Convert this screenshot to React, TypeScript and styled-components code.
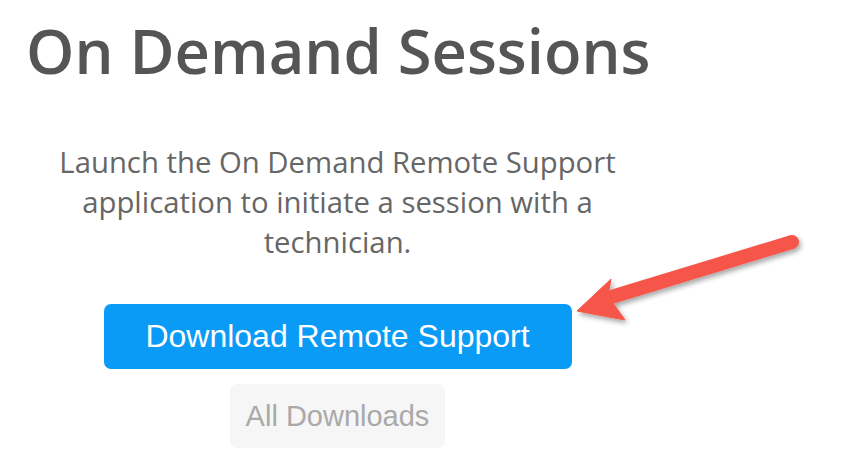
import React from "react";
import styled, { createGlobalStyle } from "styled-components";

const Global = createGlobalStyle`
  html, body { margin: 0; padding: 0; background: #ffffff; }
  body { width: 867px; height: 461px; overflow: hidden; }
`;

const Page = styled.div`
  position: relative;
  width: 867px;
  height: 461px;
  background: #fff;
`;

const Column = styled.main`
  width: 675px;
  display: flex;
  flex-direction: column;
  align-items: center;
  padding-top: 14px;
`;

const Title = styled.h1`
  align-self: stretch;
  margin: 0;
  padding-left: 26px;
  font-family: "Open Sans", sans-serif;
  font-weight: 600;
  font-size: 61.5px;
  line-height: 72px;
  color: #555555;
  letter-spacing: 0;
`;

const Lead = styled.p`
  margin: 56px 0 0;
  max-width: 600px;
  text-align: center;
  font-family: "Open Sans", sans-serif;
  font-weight: 400;
  font-size: 29.3px;
  line-height: 40px;
  color: #666666;
`;

const Button = styled.a<{ $variant: "primary" | "muted" }>`
  display: flex;
  align-items: center;
  justify-content: center;
  box-sizing: border-box;
  font-family: "Liberation Sans", Arial, sans-serif;
  text-decoration: none;
  border-radius: 7px;
  ${({ $variant }) =>
    $variant === "primary"
      ? `
    margin-top: 42px;
    width: 468px;
    height: 65px;
    background: #0a9bf6;
    color: #ffffff;
    font-size: 32px;
  `
      : `
    margin-top: 15px;
    width: 215px;
    height: 64px;
    background: #f6f6f6;
    color: #a9a9a9;
    font-size: 29px;
  `}
`;

const Arrow = styled.svg`
  position: absolute;
  left: 0;
  top: 0;
  pointer-events: none;
`;

export default function App() {
  return (
    <Page>
      <Global />
      <Column>
        <Title>On Demand Sessions</Title>
        <Lead>
          Launch the On Demand Remote Support application to initiate a session with a technician.
        </Lead>
        <Button $variant="primary" href="#">Download Remote Support</Button>
        <Button $variant="muted" href="#">All Downloads</Button>
      </Column>
      <Arrow width="867" height="461" viewBox="0 0 867 461">
        <defs>
          <filter id="sh" x="-20%" y="-40%" width="140%" height="180%">
            <feDropShadow dx="2" dy="3" stdDeviation="2.5" floodColor="#000" floodOpacity="0.35" />
          </filter>
        </defs>
        <g filter="url(#sh)" fill="#f6564a" stroke="#f6564a">
          <line x1="792" y1="242" x2="608" y2="298" strokeWidth="14" strokeLinecap="round" />
          <path d="M577 311 L611 279 L608 296 L625 320 Z" strokeWidth="1" strokeLinejoin="round" />
        </g>
      </Arrow>
    </Page>
  );
}
